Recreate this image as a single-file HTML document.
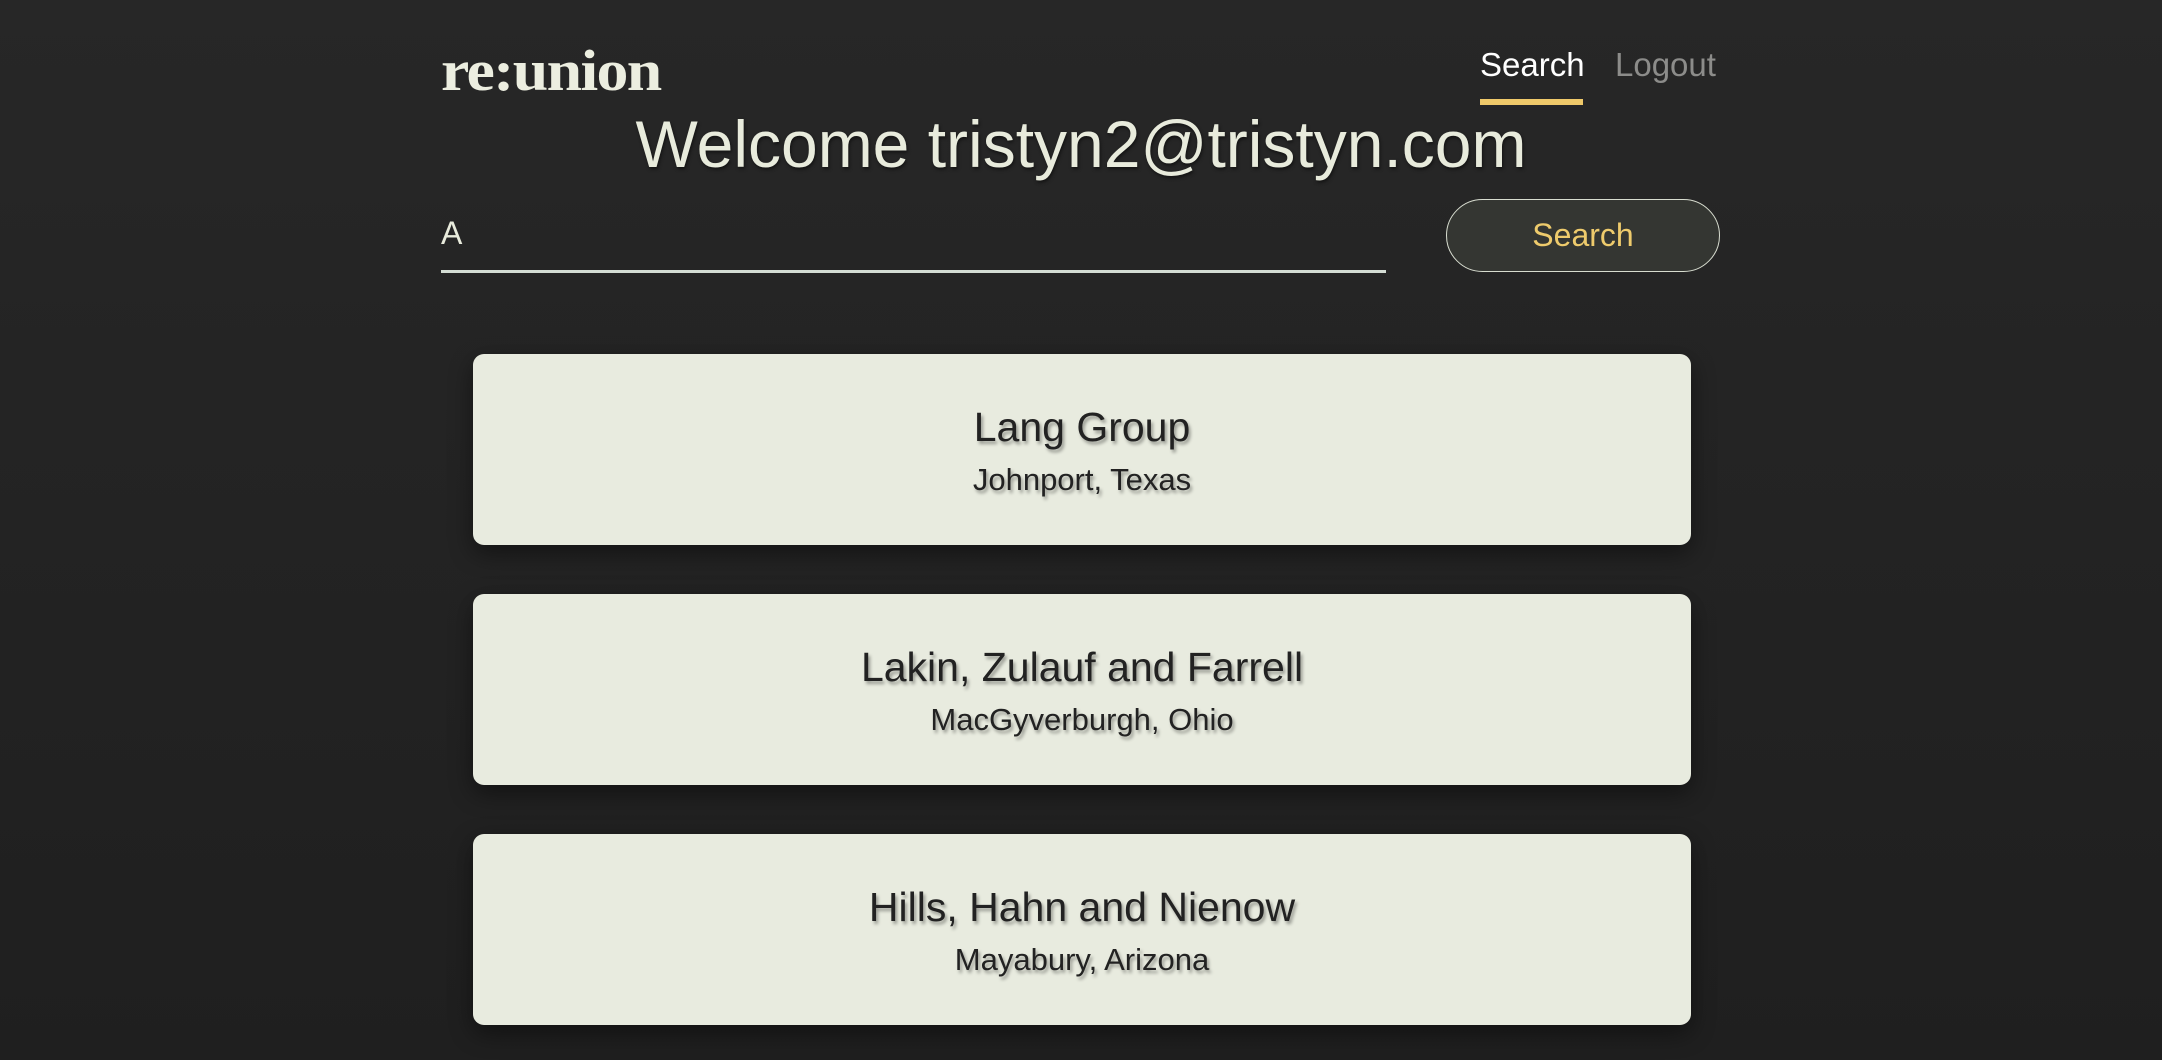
<!DOCTYPE html>
<html><head><meta charset="utf-8"><style>
html,body{margin:0;padding:0}
body{width:2162px;height:1060px;overflow:hidden;background:linear-gradient(#272727,#1f1f1f);font-family:"Liberation Sans",sans-serif;position:relative}
.logo{position:absolute;left:441px;top:37px;font-family:"Liberation Serif",serif;font-weight:bold;font-size:58px;color:#eceee0;letter-spacing:-1.5px;transform:scaleX(1.1);transform-origin:left}
.nav{position:absolute;top:46px;font-size:33px}
.u{position:absolute;left:1480px;top:99px;width:103px;height:6px;background:#efc96a}
.welcome{position:absolute;left:0;width:2162px;top:106px;text-align:center;font-size:66px;color:#e8ebdc;text-shadow:1px 2px 3px rgba(0,0,0,.5)}
.inp{position:absolute;left:441px;top:215px;font-size:32px;color:#e8ebdc}
.line{position:absolute;left:441px;top:270px;width:945px;height:3px;background:#d4ddd4}
.btn{position:absolute;left:1446px;top:199px;width:272px;height:71px;border:1.5px solid #d8ddd0;border-radius:38px;background:#343632;color:#eecb6c;font-size:32px;text-align:center;line-height:71px}
.card{position:absolute;left:473px;width:1218px;height:191px;background:#e8ebdf;border-radius:11px;box-shadow:0 8px 24px rgba(0,0,0,.45);text-align:center;color:#222}
.card .t{position:absolute;top:50px;width:100%;font-size:41px;text-shadow:2px 3px 3px rgba(0,0,0,.35)}
.card .s{position:absolute;top:108px;width:100%;font-size:31px;text-shadow:2px 3px 3px rgba(0,0,0,.35)}
</style></head><body>
<div class="logo">re:union</div>
<div class="nav" style="left:1480px;color:#fff">Search</div>
<div class="nav" style="left:1615px;color:#8c8c8a">Logout</div>
<div class="u"></div>
<div class="welcome">Welcome tristyn2@tristyn.com</div>
<div class="inp">A</div>
<div class="line"></div>
<div class="btn">Search</div>
<div class="card" style="top:354px"><div class="t">Lang Group</div><div class="s">Johnport, Texas</div></div>
<div class="card" style="top:594px"><div class="t">Lakin, Zulauf and Farrell</div><div class="s">MacGyverburgh, Ohio</div></div>
<div class="card" style="top:834px"><div class="t">Hills, Hahn and Nienow</div><div class="s">Mayabury, Arizona</div></div>
</body></html>
